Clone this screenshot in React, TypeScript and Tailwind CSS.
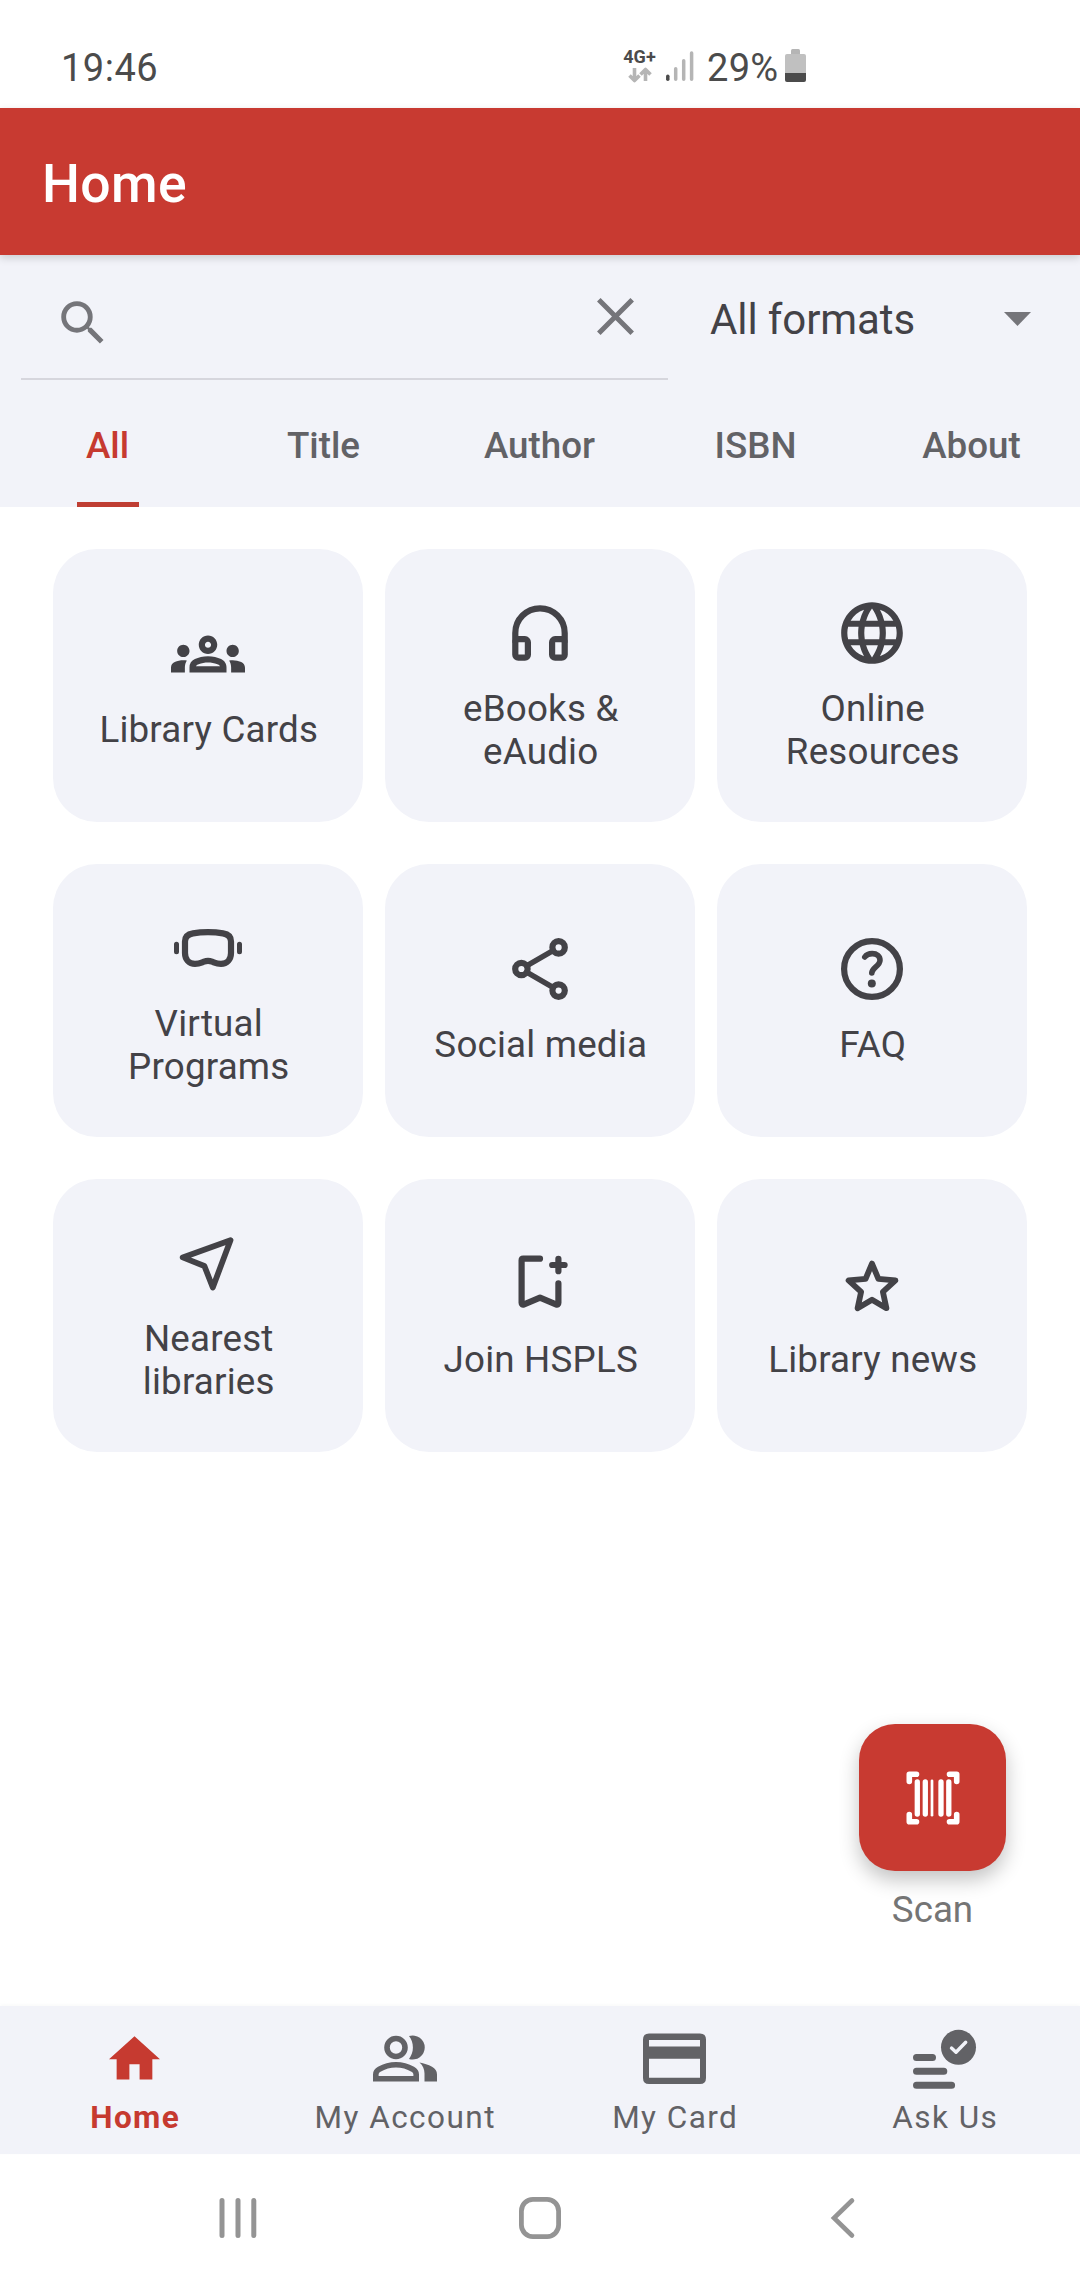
import type { ReactNode } from "react";
import { MdLanguage, MdOutlineGroups, MdSearch } from "react-icons/md";

/* Tile icons share a 74px box whose origin sits in its centre. */
function TileIcon({ children }: { children: ReactNode }) {
  return (
    <svg
      className="size-[74px]"
      viewBox="-37 -37 74 74"
      fill="none"
      stroke="currentColor"
      strokeWidth={6.2}
      strokeLinecap="round"
      strokeLinejoin="round"
    >
      {children}
    </svg>
  );
}

const tiles: { label: string; icon: ReactNode }[] = [
  { label: "Library Cards", icon: <MdOutlineGroups className="size-[74px]" /> },
  {
    label: "eBooks & eAudio",
    icon: (
      <TileIcon>
        <path d="M-24.7 8V0A24.7 24.7 0 0 1 24.7 0V8" />
        <rect x="-24.7" y="6.2" width="12.6" height="18.5" rx="3" />
        <rect x="12.1" y="6.2" width="12.6" height="18.5" rx="3" />
      </TileIcon>
    ),
  },
  { label: "Online Resources", icon: <MdLanguage className="size-[74px]" /> },
  {
    label: "Virtual Programs",
    icon: (
      <TileIcon>
        <path d="M0-15.8C6-15.8 11-15.3 15-14.6 20.5-13.7 23-11 23-6.5V5C23 11.5 18.8 15.8 13 15.8 8.6 15.8 7 14.7 4 13.6 1.5 12.7-1.5 12.7-4 13.6-7 14.7-8.6 15.8-13 15.8-18.8 15.8-23 11.5-23 5V-6.5C-23-11-20.5-13.7-15-14.6-11-15.3-6-15.8 0-15.8Z" />
        <path d="M-31.5-3.7V3.7M31.5-3.7V3.7" strokeWidth={5} />
      </TileIcon>
    ),
  },
  {
    label: "Social media",
    icon: (
      <TileIcon>
        <path d="M-13.4-3.1 13.4-18.6M-13.4 3.1 13.4 18.6" strokeWidth={5.4} />
        <circle cx="18.6" cy="-21.6" r="6.2" />
        <circle cx="18.6" cy="21.6" r="6.2" />
        <circle cx="-18.6" cy="0" r="6.2" />
      </TileIcon>
    ),
  },
  {
    label: "FAQ",
    icon: (
      <TileIcon>
        <circle cx="0" cy="0" r="27.9" />
        <path d="M-7.2-12C-5.5-14.4-3-15.4.2-15.4 4.8-15.4 8-12.8 8-8.8 8-3-.2-1.4-.2 4" strokeWidth={5.6} />
        <circle cx="-.2" cy="14.5" r="4" fill="currentColor" stroke="none" />
      </TileIcon>
    ),
  },
  {
    label: "Nearest libraries",
    icon: (
      <TileIcon>
        <path d="M22.5-22.8-25.3-5.6-3.6 3 4.8 24.5Z" strokeWidth={5.8} />
      </TileIcon>
    ),
  },
  {
    label: "Join HSPLS",
    icon: (
      <TileIcon>
        <path d="M0-25.3H-16.8Q-18.4-25.3-18.4-23.7V18.7Q-18.4 21.4-15.9 20.4L0 13.6 15.9 20.4Q18.4 21.4 18.4 18.7V-.6M18.4-25.2V-12.8M12.2-19H24.6" />
      </TileIcon>
    ),
  },
  {
    label: "Library news",
    icon: (
      <TileIcon>
        <path d="M0-20.4 6.4-5.2 23.4-3.6 10.9 7.8 14.4 24.2 0 15.8-14.4 24.2-10.9 7.8-23.4-3.6-6.4-5.2Z" strokeWidth={5.8} />
      </TileIcon>
    ),
  },
];

const tabs = ["All", "Title", "Author", "ISBN", "About"];

const navItems: { label: string; icon: ReactNode }[] = [
  {
    label: "Home",
    icon: (
      <svg className="size-16" viewBox="-0.35 -0.6 25.1 25.1" fill="currentColor">
        <path d="M10 20v-6h4v6h5v-8h3L12 3 2 12h3v8z" />
      </svg>
    ),
  },
  {
    label: "My Account",
    icon: (
      <svg className="size-16" viewBox="0 0 64 64" fill="currentColor">
        <circle cx="23" cy="20.5" r="9" fill="none" stroke="currentColor" strokeWidth="5.6" />
        <path d="M36 9.1A12 12 0 1 1 36 31.9C38.5 28.6 39.9 24.8 39.9 20.5S38.5 12.4 36 9.1Z" />
        <path
          fillRule="evenodd"
          d="M0 54.5V47.5C0 44 1.8 41.4 5 39.8 10.5 36.8 16.5 35 23 35S35.5 36.8 41 39.8C44.2 41.4 46 44 46 47.5V54.5ZM5.6 49H40.4V47.5C40.4 46.2 39.7 45.3 38.5 44.7 33.8 42.2 28.7 40.6 23 40.6S12.2 42.2 7.5 44.7C6.3 45.3 5.6 46.2 5.6 47.5Z"
        />
        <path d="M51.5 54.5V46.5C51.5 42 49.8 38.3 46.5 35.4 51 36.2 55.3 37.6 59 39.7 62.2 41.5 64 44 64 47.5V54.5Z" />
      </svg>
    ),
  },
  {
    label: "My Card",
    icon: (
      <svg className="size-16" viewBox="0 0 64 64" fill="currentColor">
        <path
          fillRule="evenodd"
          d="M6 6.500H57Q63 6.500 63 12.500V51Q63 57 57 57H6Q0 57 0 51V12.500Q0 6.500 6 6.500ZM6 13V19.500H57V13ZM6 31.800V50.700H57V31.800Z"
        />
      </svg>
    ),
  },
  {
    label: "Ask Us",
    icon: (
      <svg className="size-16" viewBox="0 0 64 64" fill="none" stroke="currentColor" strokeLinecap="round" strokeWidth="7">
        <path d="M3.5 30.500H19.5M3.5 44.300H30.8M3.5 58.200H38.6" />
        <circle cx="45.5" cy="20.300" r="17.5" fill="currentColor" stroke="none" />
        <path d="M38.5 21.100 43 25.300 52.7 15.300" stroke="#f2f3f9" strokeWidth="3.4" strokeLinejoin="round" />
      </svg>
    ),
  },
];

function StatusBar() {
  return (
    <div className="flex h-[108px] items-start bg-white pt-[46px] pl-[61px] text-[38px] leading-[44px] text-[#4b4b4b]">
      <span className="w-[562px] tracking-[0.5px]">19:46</span>
      <div className="flex w-[33px] flex-col items-center pt-px">
        <span className="text-[18px] leading-5 font-bold">4G+</span>
        <svg className="h-4 w-[24px]" viewBox="0 0 24 16" fill="none" stroke="#b5b5b5" strokeWidth="3.6" strokeLinejoin="round">
          <path d="M6.5 1V13M1.5 8.5 6.5 13.5 11.5 8.5M17.5 14V3M12.5 7.5 17.5 2.5 22.5 7.5" />
        </svg>
      </div>
      <svg className="mt-[5px] ml-[10px] h-[30px] w-7" viewBox="0 0 28 30" strokeWidth="3.5" strokeLinecap="round">
        <path d="M1.8 25.2V28.2" stroke="#4b4b4b" />
        <path d="M9.7 17.7V28.2M17.7 9.7V28.2M25.6 2V28.2" stroke="#b5b5b5" />
      </svg>
      <span className="ml-[13px] w-[73px] tracking-[0.3px]">29%</span>
      <svg className="mt-[3px] ml-[5px] h-[33px] w-[21px]" viewBox="0 0 21 33">
        <path d="M6 6V1.5Q6 0 7.5 0H13.5Q15 0 15 1.5V6Z" fill="#b5b5b5" />
        <path d="M0 24V7Q0 5 2 5H19Q21 5 21 7V24Z" fill="#c0c0c0" />
        <path d="M0 24H21V31Q21 33 19 33H2Q0 33 0 31Z" fill="#4b4b4b" />
      </svg>
    </div>
  );
}

function SearchPanel() {
  return (
    <section className="bg-[#f2f3f9]">
      <div className="flex h-[126px] pr-[43px] pl-[21px]">
        <div className="flex h-[125px] w-[647px] items-start justify-between border-b-2 border-[#d6d6dd] pr-[34px] pl-[33px] text-[#75757a]">
          <MdSearch className="mt-[39px] size-[58px]" />
          <svg className="mt-[43px] h-[37px] w-[37px]" viewBox="0 0 37 37" stroke="currentColor" strokeWidth="5">
            <path d="M1.8 1.8 35.2 35.2M35.2 1.8 1.8 35.2" />
          </svg>
        </div>
        <div className="flex flex-1 items-start justify-between pt-[40px] pl-[42px]">
          <span className="text-[42px] leading-[50px] tracking-[-0.1px] text-[#434247]">All formats</span>
          <svg className="mt-[17px] mr-[6px] h-[14px] w-[27px]" viewBox="0 0 27 14" fill="#75757a">
            <path d="M0 0H27L13.5 14Z" />
          </svg>
        </div>
      </div>
      <div className="grid h-[126px] grid-cols-5 text-[36.75px] leading-[43px] font-medium text-[#626266]">
        {tabs.map((tab, i) =>
          i === 0 ? (
            <div key={tab} className="flex flex-col items-center justify-between pt-[43px] text-[#c63a30]">
              <span className="pr-px">{tab}</span>
              <span className="h-[5px] w-[62px] bg-[#bf3e33]" />
            </div>
          ) : (
            <div key={tab} className="pt-[43px] pr-px text-center">
              {tab}
            </div>
          ),
        )}
      </div>
    </section>
  );
}

export default function App() {
  return (
    <div className="flex h-[2280px] w-[1080px] flex-col overflow-hidden bg-white font-['Roboto',sans-serif]">
      <StatusBar />
      <header className="z-10 flex h-[147px] items-center bg-[#c83a31] pt-[4px] pl-[42px] text-[53.5px] leading-[62px] font-medium tracking-[0.4px] text-white shadow-[0_3px_8px_rgba(0,0,0,0.16)]">
        Home
      </header>
      <SearchPanel />

      <main className="flex flex-1 flex-col pt-[42px] pr-[53px] pl-[53px]">
        <div className="grid grid-cols-3 gap-x-[22px] gap-y-[42px] text-[#434247]">
          {tiles.map((tile) => (
            <div
              key={tile.label}
              className="flex h-[273px] flex-col items-center justify-center gap-[17px] rounded-[44px] bg-[#f2f3f9] px-[30px] pb-[3px]"
            >
              {tile.icon}
              <span className="pl-[1.5px] text-center text-[36.75px] leading-[43px] tracking-[0.2px]">{tile.label}</span>
            </div>
          ))}
        </div>

        <div className="mt-auto mr-[21px] mb-[75px] flex w-[147px] flex-col items-center gap-[17px] self-end">
          <button className="flex size-[147px] items-center justify-center rounded-[36px] bg-[#c83a31] shadow-[0_9px_20px_rgba(0,0,0,0.24)]">
            <svg className="size-[54px]" viewBox="0 0 54 54" fill="none" stroke="#fff" strokeLinecap="round" strokeLinejoin="round" strokeWidth="5.6">
              <path d="M3.3 10.5V3.3H10.5M43.5 3.3H50.7V10.5M3.3 43.5V50.7H10.5M43.5 50.7H50.7V43.5" />
              <path d="M11.3 11V43M19.3 11V43M35 11V43M42.8 11V43" strokeWidth="5.3" />
              <path d="M26 9.8V44.2" strokeWidth="2.7" />
            </svg>
          </button>
          <span className="text-[36.75px] leading-[43px] text-[#757575]">Scan</span>
        </div>
      </main>

      <nav className="grid h-[148px] grid-cols-4 bg-[#f2f3f9] shadow-[0_-1px_4px_rgba(0,0,0,0.03)]">
        {navItems.map((item, i) => (
          <div
            key={item.label}
            className={
              i === 0
                ? "flex flex-col items-center gap-[8px] pt-[21px] font-bold text-[#c63a30]"
                : "flex flex-col items-center gap-[8px] pt-[21px] text-[#626266]"
            }
          >
            {item.icon}
            <span className="pl-[0.5px] text-[31.5px] leading-[37px] tracking-[1.45px]">{item.label}</span>
          </div>
        ))}
      </nav>

      <div className="flex h-[126px] items-center justify-center gap-[260px] pt-[2px]">
        <svg className="size-[42px]" viewBox="0 0 42 42" stroke="#949494" strokeWidth="5" strokeLinecap="round">
          <path d="M5 3.5V38.5M21 3.5V38.5M36.8 3.5V38.5" />
        </svg>
        <svg className="size-[42px]" viewBox="0 0 42 42" fill="none" stroke="#949494" strokeWidth="4.8">
          <rect x="2.4" y="2.4" width="37.2" height="37.2" rx="11.5" />
        </svg>
        <svg className="size-[42px]" viewBox="0 0 42 42" fill="none" stroke="#949494" strokeWidth="4.6" strokeLinecap="round">
          <path d="M31 3.5 13 21 31 38.5" strokeLinejoin="miter" />
        </svg>
      </div>
    </div>
  );
}
